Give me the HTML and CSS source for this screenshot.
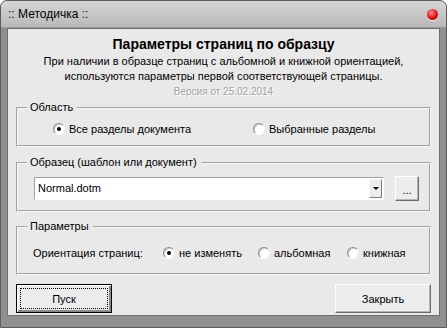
FILE: index.html
```html
<!DOCTYPE html>
<html lang="ru">
<head>
    <meta charset="UTF-8">
    <title>Методичка</title>
    <link rel="stylesheet" href="styles.css">
</head>
<body>
    <div class="window">
        <div class="titlebar">
            <span class="title">:: Методичка ::</span>
            <span class="close-dot"></span>
        </div>

        <div class="panel">
            <h1>Параметры страниц по образцу</h1>
            <p class="desc">При наличии в образце страниц с альбомной и книжной ориентацией,<br>используются параметры первой соответствующей страницы.</p>
            <p class="version">Версия от 25.02.2014</p>

            <fieldset class="group">
                <legend>Область</legend>
                <div class="group-body body-area">
                    <label class="opt"><input type="radio" name="area" checked> Все разделы документа</label>
                    <label class="opt"><input type="radio" name="area"> Выбранные разделы</label>
                </div>
            </fieldset>

            <fieldset class="group group-sample">
                <legend>Образец (шаблон или документ)</legend>
                <div class="group-body body-sample">
                    <div class="combo">
                        <span class="combo-text">Normal.dotm</span>
                        <span class="combo-btn"><span class="arrow"></span></span>
                    </div>
                    <button class="btn btn-browse" type="button">...</button>
                </div>
            </fieldset>

            <fieldset class="group group-params">
                <legend>Параметры</legend>
                <div class="group-body body-params">
                    <span class="orient-label">Ориентация страниц:</span>
                    <label class="opt"><input type="radio" name="orient" checked> не изменять</label>
                    <label class="opt"><input type="radio" name="orient"> альбомная</label>
                    <label class="opt"><input type="radio" name="orient"> книжная</label>
                </div>
            </fieldset>

            <div class="actions">
                <button class="btn btn-default" type="button"><span class="focus">Пуск</span></button>
                <button class="btn" type="button">Закрыть</button>
            </div>
        </div>
    </div>
</body>
</html>
```

FILE: styles.css
```css
:root {
    --frame: #8f8f8f;
    --panel: #e9e9e9;
    --text: #000000;
    --muted: #a3a3a3;
}

* {
    box-sizing: border-box;
}

body {
    margin: 0;
    background: #ffffff;
    font-family: 'Liberation Sans', Arial, sans-serif;
    font-size: 11px;
    color: var(--text);
}

.window {
    width: 447px;
    height: 328px;
    background: var(--frame);
    border: 1px solid #5c5c5c;
    border-radius: 7px 7px 0 0;
    display: flex;
    flex-direction: column;
    overflow: hidden;
}

.titlebar {
    height: 27px;
    flex: none;
    display: flex;
    align-items: center;
    justify-content: space-between;
    padding: 0 8px 0 7px;
    background: linear-gradient(#d6d6d6, #b9b9b9);
    border-bottom: 1px solid #9a9a9a;
}

.title {
    font-size: 12px;
}

.close-dot {
    width: 11px;
    height: 11px;
    border-radius: 50%;
    background: radial-gradient(circle at 40% 35%, #ff8a8a, #e01010 55%, #a00000);
    box-shadow: 0 1px 0 #f4f4f4;
}

.panel {
    margin: 0 6px;
    height: 288px;
    background: var(--panel);
    border: 1px solid #6e6e6e;
    padding: 6px 8px 0 8px;
    display: flex;
    flex-direction: column;
    text-align: center;
}

h1 {
    margin: 0;
    font-size: 14px;
    line-height: 18px;
    font-weight: bold;
}

.desc {
    margin: 1px 0 0 0;
    line-height: 15px;
}

.version {
    margin: 1px 0 0 0;
    font-size: 10px;
    line-height: 14px;
    color: var(--muted);
    text-shadow: 1px 1px 0 #ffffff;
}

/* group boxes */
.group {
    margin: 2px 0 0 0;
    border: 2px groove #f6f6f6;
    padding: 0;
    text-align: left;
}

.group legend {
    margin-left: 9px;
    padding: 0 4px 0 3px;
    line-height: 13px;
}

.group-sample {
    margin-top: 9px;
}

.group-params {
    margin-top: 8px;
}

.group-body {
    align-items: center;
}

.body-area {
    height: 31px;
    padding: 0 0 2px 35px;
    display: grid;
    grid-template-columns: 200px 1fr;
}

.body-sample {
    height: 41px;
    padding: 0 0 3px 16px;
    display: flex;
}

.body-params {
    height: 40px;
    padding: 0 0 0 15px;
    display: grid;
    grid-template-columns: 130px 95px 89px 1fr;
}

.opt {
    display: flex;
    align-items: center;
    gap: 4px;
}

.opt input {
    appearance: none;
    margin: 0;
    width: 12px;
    height: 12px;
    border-radius: 50%;
    border: 1px solid;
    border-color: #8a8a8a #f2f2f2 #ffffff #8a8a8a;
    background: #ffffff;
    box-shadow: inset 1px 1px 0 #d0d0d0;
    position: relative;
}

.opt input:checked::after {
    content: '';
    position: absolute;
    left: 3px;
    top: 3px;
    width: 4px;
    height: 4px;
    border-radius: 50%;
    background: #000000;
}

.combo {
    width: 350px;
    height: 23px;
    background: #ffffff;
    border: 1px solid;
    border-color: #a0a0a0 #ffffff #ffffff #a0a0a0;
    display: flex;
    align-items: center;
    padding: 0 1px 0 3px;
}

.combo-text {
    flex: 1;
}

.combo-btn {
    width: 13px;
    height: 19px;
    background: #ececec;
    border: 1px solid;
    border-color: #f8f8f8 #7a7a7a #7a7a7a #f8f8f8;
    display: flex;
    align-items: center;
    justify-content: center;
}

.arrow {
    border-left: 3px solid transparent;
    border-right: 3px solid transparent;
    border-top: 3px solid #000000;
    margin-top: 1px;
}

.btn {
    font: inherit;
    color: var(--text);
    background: #ececec;
    border: 1px solid;
    border-color: #ffffff #6c6c6c #6c6c6c #ffffff;
    box-shadow: inset -1px -1px 0 #b4b4b4;
    padding: 0;
    width: 96px;
    height: 29px;
}

.btn-browse {
    width: 24px;
    height: 25px;
    margin-left: 11px;
    padding-top: 3px;
}

.actions {
    margin-top: 9px;
    display: flex;
    justify-content: space-between;
}

.btn-default {
    border: 1px solid #000000;
    box-shadow: inset 1px 1px 0 #ffffff, inset -2px -2px 0 #8a8a8a;
    padding: 3px;
}

.focus {
    display: flex;
    align-items: center;
    justify-content: center;
    height: 100%;
    border: 1px dotted #000000;
}

.orient-label {
    white-space: nowrap;
}
```
